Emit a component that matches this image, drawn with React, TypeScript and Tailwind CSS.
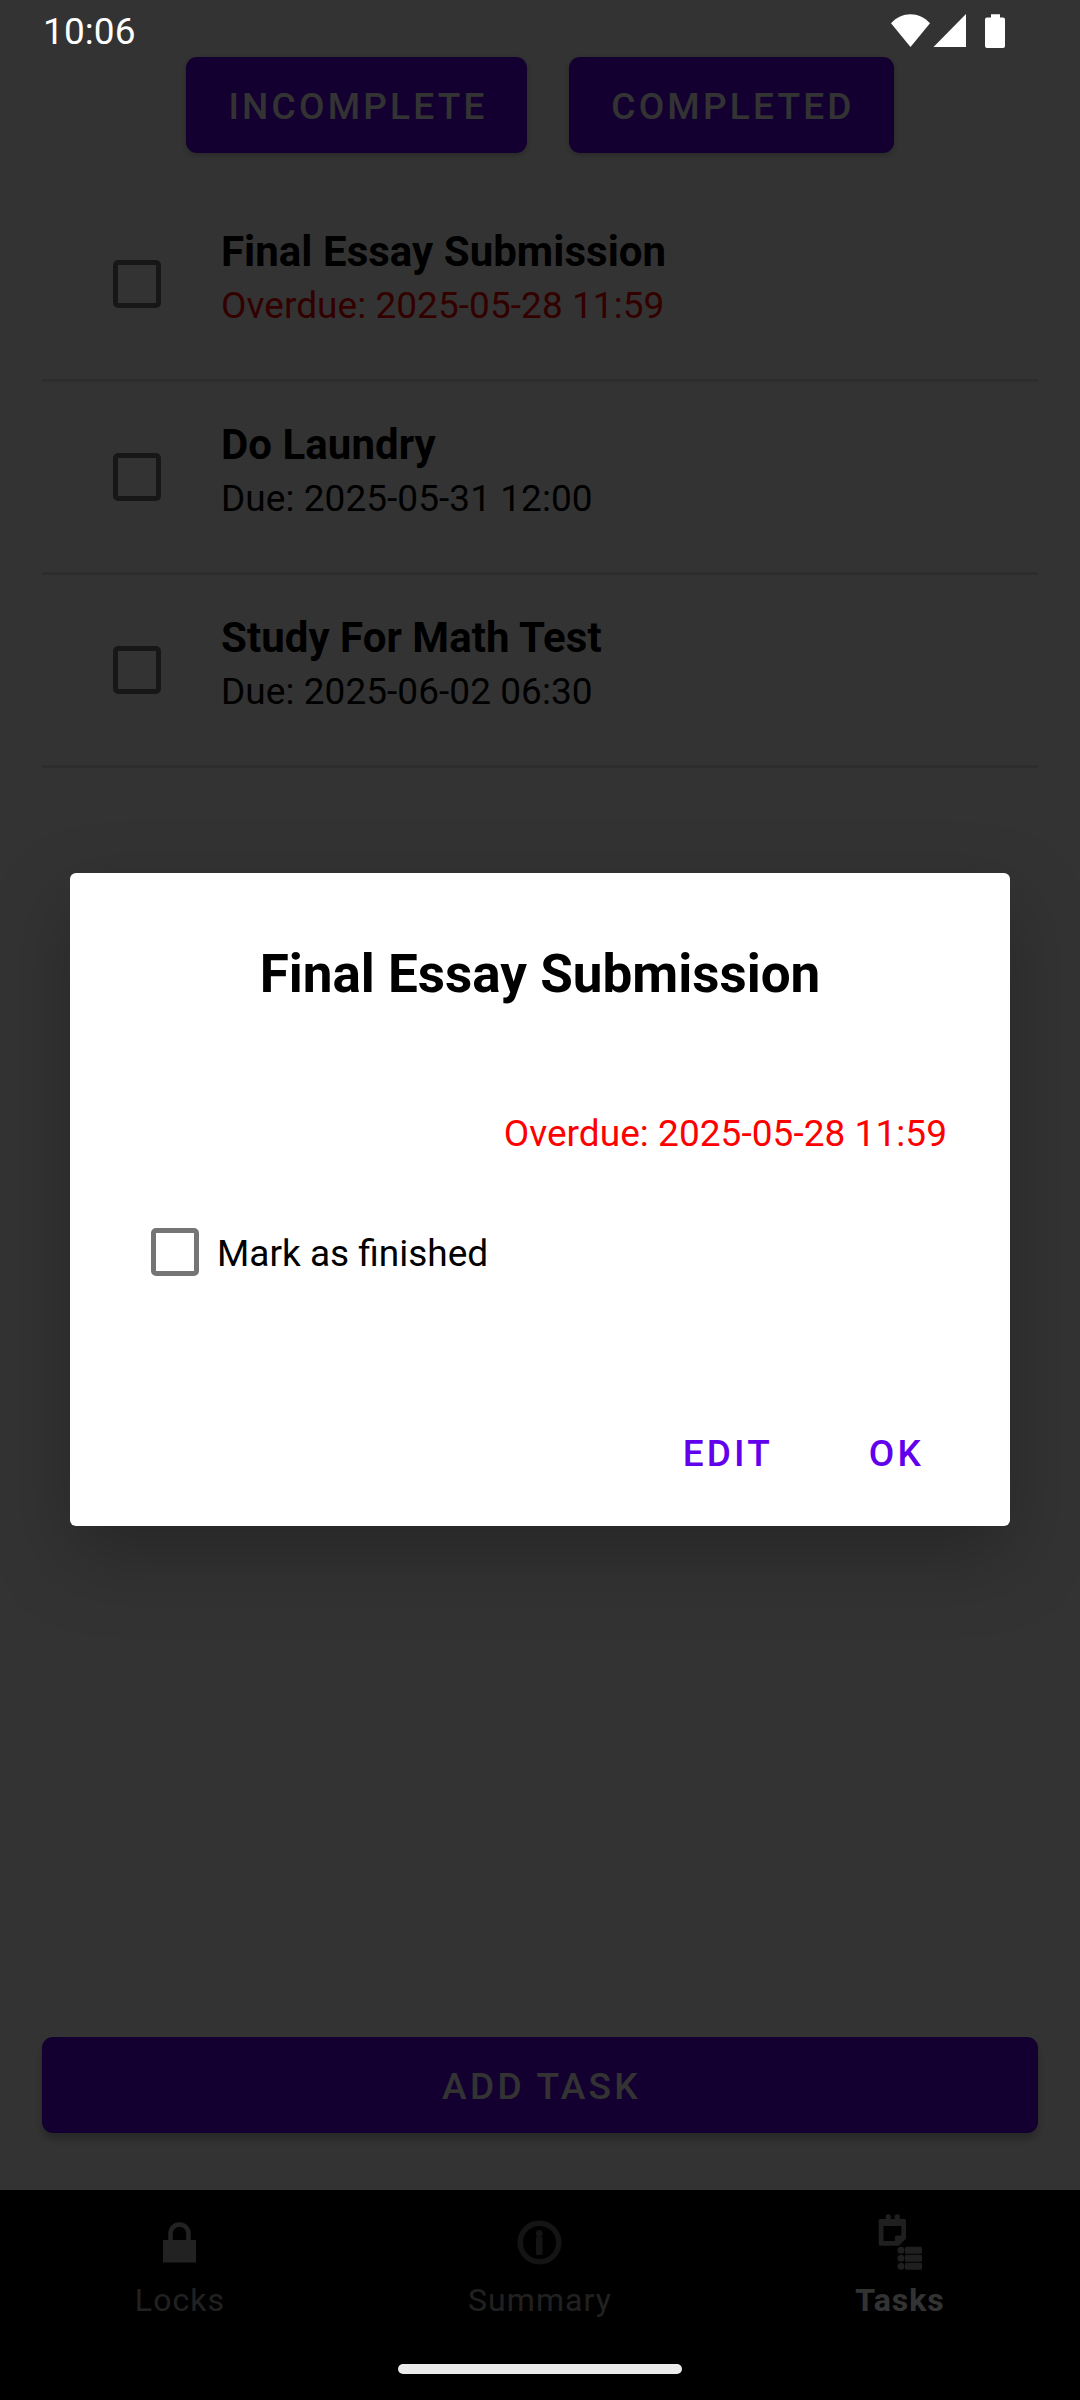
import React from "react";

type Task = { title: string; due: string; overdue?: boolean };

const tasks: Task[] = [
  { title: "Final Essay Submission", due: "Overdue: 2025-05-28 11:59", overdue: true },
  { title: "Do Laundry", due: "Due: 2025-05-31 12:00" },
  { title: "Study For Math Test", due: "Due: 2025-06-02 06:30" },
];

function Checkbox() {
  return <span className="block h-[48px] w-[48px] shrink-0 rounded-[5px] border-[5.25px] border-[#757575]" />;
}

function StatusBar() {
  return (
    <div className="absolute inset-x-0 top-0 flex h-[63px] items-start justify-between pl-[43px] pr-[74px] text-white">
      <span className="pt-[9px] text-[37px] leading-[46px] tracking-[0.1px]">10:06</span>
      <svg className="mt-[13px] h-[36px] w-[115px]" viewBox="0 0 115 36" fill="currentColor">
        <path d="M0 10.2C11 -1.9 28 -1.9 39 10.2L19.5 34Z" />
        <path d="M42.500 34H75V1Z" />
        <path d="M96 4.500H100V1.300H109V4.500H112Q114 4.500 114 6.500V33Q114 35 112 35H96Q94 35 94 33V6.500Q94 4.500 96 4.500Z" />
      </svg>
    </div>
  );
}

function LockIcon() {
  return (
    <svg className="h-[63px] w-[63px]" viewBox="0 0 63 63">
      <path d="M22.500 31V22.500a9 9 0 0 1 18 0V31" fill="none" stroke="#aaaaaa" strokeWidth="4.500" />
      <rect x="15" y="29" width="33" height="22.500" fill="#aaaaaa" />
    </svg>
  );
}

function InfoIcon() {
  return (
    <svg className="h-[63px] w-[63px]" viewBox="0 0 63 63">
      <circle cx="31.500" cy="31.500" r="19.300" fill="none" stroke="#646464" strokeWidth="5.500" />
      <circle cx="31.300" cy="22.500" r="3.500" fill="#646464" />
      <rect x="28" y="25.500" width="6.600" height="18.500" rx="1.500" fill="#646464" />
    </svg>
  );
}

function TasksIcon() {
  return (
    <svg className="h-[63px] w-[63px]" viewBox="0 0 63 63" fill="#9a9a9a">
      <circle cx="20.200" cy="6" r="2.700" />
      <circle cx="29.200" cy="6" r="2.700" />
      <rect x="18" y="6.500" width="4.400" height="4" />
      <rect x="27" y="6.500" width="4.400" height="4" />
      <path
        fillRule="evenodd"
        d="M12 8H36.500Q38 8 38 9.500V27.500L31 34.700H12.200Q10.700 34.700 10.700 33.200V9.500Q10.700 8 12 8ZM15.500 15V30H27V26.500Q27 24.500 29 24.500H33.300V15Z"
      />
      {[39.3, 47.3, 55.2].map((y) => (
        <g key={y}>
          <circle cx="33" cy={y} r="3.500" />
          <rect x="37" y={y - 3.5} width="17" height="7" rx="1.500" />
        </g>
      ))}
    </svg>
  );
}

function NavItem({ icon, label, active }: { icon: React.ReactNode; label: string; active?: boolean }) {
  return (
    <div className="flex flex-1 flex-col items-center pt-[21px]">
      <span className="pr-[2px]">{icon}</span>
      <span
        className={
          active
            ? "mt-[5px] text-[32px] font-bold leading-[42px] tracking-[0.03em] text-white"
            : "mt-[5px] text-[32px] leading-[42px] tracking-[0.0333em] text-[#a6a6a6]"
        }
      >
        {label}
      </span>
    </div>
  );
}

function TaskDialog() {
  return (
    <div className="flex h-[653px] w-[940px] flex-col rounded-[6px] bg-white text-black shadow-[0_30px_80px_rgba(0,0,0,0.25)]">
      <h2 className="mt-[66px] text-center text-[53px] font-bold leading-[70px]">Final Essay Submission</h2>
      <p className="mt-[100px] pr-[63px] text-right text-[37px] leading-[50px] tracking-[0.05px] text-[#ff0000]">
        Overdue: 2025-05-28 11:59
      </p>
      <label className="mt-[69px] flex h-[48px] items-center pl-[81px]">
        <Checkbox />
        <span className="ml-[18px] pt-[4px] text-[37px] leading-[50px]">Mark as finished</span>
      </label>
      <div className="mt-[153px] flex justify-end gap-[96px] pr-[86px] text-[37px] font-medium leading-[50px] tracking-[0.085em] text-[#6200ee]">
        <button>EDIT</button>
        <button>OK</button>
      </div>
    </div>
  );
}

export default function App() {
  return (
    <div className="relative flex h-[2400px] w-[1080px] flex-col overflow-hidden bg-white font-[Roboto,sans-serif] text-black">
      <div className="flex justify-center gap-[42px] pt-[57px] text-[37px] font-medium leading-[50px] tracking-[0.087em] text-white">
        <button className="h-[96px] w-[341px] rounded-[11px] bg-[#6200ee] pl-[3px] pt-[4px] shadow-[0_2px_6px_rgba(0,0,0,0.25)]">
          INCOMPLETE
        </button>
        <button className="h-[96px] w-[325px] rounded-[11px] bg-[#6200ee] pl-[3px] pt-[4px] shadow-[0_2px_6px_rgba(0,0,0,0.25)]">
          COMPLETED
        </button>
      </div>

      <div className="mt-[36px] flex flex-1 flex-col px-[42px]">
        {tasks.map((task) => (
          <div key={task.title} className="flex h-[193px] border-b-[3px] border-[#e0e0e0] pl-[71px]">
            <div className="pt-[71px]">
              <Checkbox />
            </div>
            <div className="ml-[60px] flex flex-col pt-[35px]">
              <span className="text-[42px] font-bold leading-[56px] tracking-[0.04px]">{task.title}</span>
              <span
                className={
                  task.overdue
                    ? "text-[37px] leading-[52px] tracking-[0.05px] text-[#ff0000]"
                    : "text-[37px] leading-[52px] tracking-[0.05px]"
                }
              >
                {task.due}
              </span>
            </div>
          </div>
        ))}
      </div>

      <div className="px-[42px] pb-[57px]">
        <button className="block h-[96px] w-full rounded-[11px] bg-[#6200ee] pl-[3px] pt-[4px] text-[37px] font-medium leading-[50px] tracking-[0.0893em] text-white shadow-[0_6px_8px_rgba(0,0,0,0.25)]">
          ADD TASK
        </button>
      </div>

      <nav className="flex h-[210px] bg-black">
        <NavItem icon={<LockIcon />} label="Locks" />
        <NavItem icon={<InfoIcon />} label="Summary" />
        <NavItem icon={<TasksIcon />} label="Tasks" active />
      </nav>

      <div className="absolute inset-0 flex justify-center bg-black/80 pt-[873px]">
        <TaskDialog />
      </div>

      <StatusBar />
      <div className="absolute bottom-[26px] left-[398px] h-[10px] w-[284px] rounded-full bg-[#ebebeb]" />
    </div>
  );
}
